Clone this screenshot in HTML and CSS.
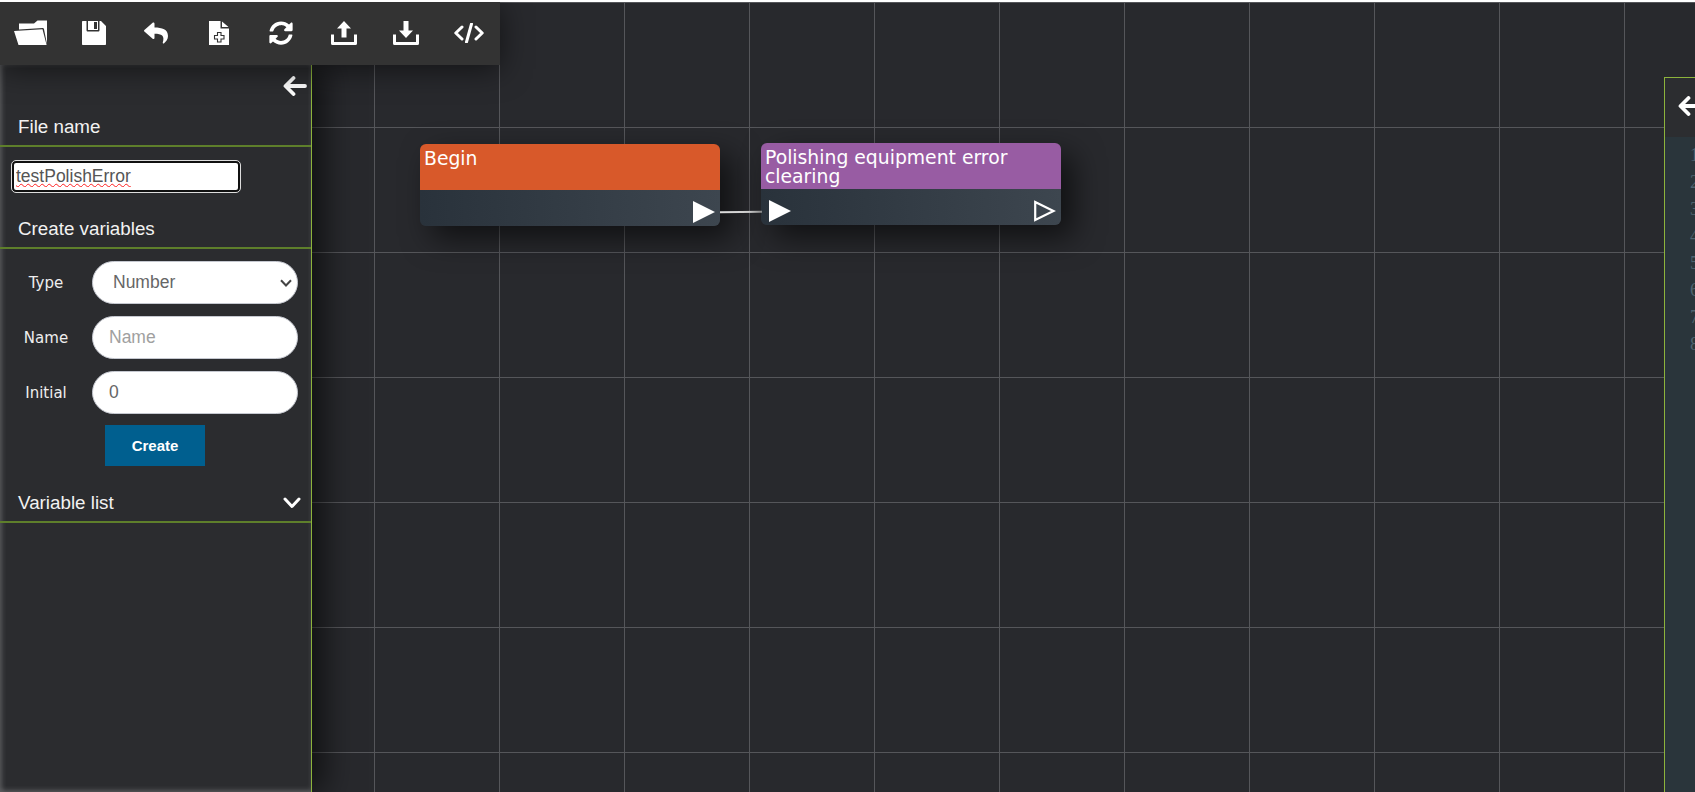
FILE: index.html
```html
<!DOCTYPE html>
<html lang="en">
<head>
    <meta charset="UTF-8">
    <title>Flow editor</title>
    <link rel="stylesheet" href="styles.css">
</head>
<body>
    <div class="app">
        <!-- Graph nodes -->
        <div class="node node-begin">
            <div class="node-title">Begin</div>
            <div class="node-body">
                <svg class="port" viewBox="0 0 22 22"><path d="M0 0L22 11L0 22z" fill="#fff"/></svg>
            </div>
        </div>
        <div class="node node-action">
            <div class="node-title">Polishing equipment error clearing</div>
            <div class="node-body">
                <svg class="port" viewBox="0 0 22 22"><path d="M0 0L22 11L0 22z" fill="#fff"/></svg>
                <svg class="port" viewBox="0 0 22 22"><path d="M1.2 2L19.5 11L1.2 20z" fill="none" stroke="#fff" stroke-width="2.2"/></svg>
            </div>
        </div>
        <div class="wire"></div>

        <!-- Toolbar -->
        <div class="toolbar">
            <svg class="tool tool-folder" viewBox="0 0 34 26"><path d="M5 5.5V3.5H20L23.5 0.5H33V24L30 9.3C29.8 8.5 29.3 8 28.5 8L5 9.6z M0 11L28.5 9.2L32.6 25H4.5z" fill="#fff"/></svg>
            <svg class="tool" viewBox="0 0 24 24"><path fill-rule="evenodd" d="M1 0H4.5V9C4.5 10 5 10.500 6 10.500H16C17 10.500 17.500 10 17.500 9V0H19L24 5V23C24 23.600 23.600 24 23 24H1C0.400 24 0 23.600 0 23V1C0 0.400 0.400 0 1 0z M6 0H16V9H6z M12 1V8H15V1z" fill="#fff"/></svg>
            <svg class="tool" viewBox="0 0 512 512"><path d="M8.309 189.836L184.313 37.851C199.719 24.546 224 35.347 224 56.015v80.053c160.629 1.839 288 34.032 288 186.258 0 61.441-39.581 122.309-83.333 154.132-13.653 9.931-33.111-2.533-28.077-18.631 45.344-145.012-21.507-183.51-176.59-185.742V360c0 20.7-24.3 31.453-39.687 18.164l-176.004-152c-11.071-9.562-11.086-26.753 0-36.328z" fill="#fff"/></svg>
            <svg class="tool" viewBox="0 0 20 24"><path d="M0 0H11.500V7.500H20V24H0z M13 0.500L19.500 6H13z" fill="#fff"/><path d="M8.500 11.500H12V14.500H15V18H12V21H8.500V18H5.500V14.500H8.500z" fill="#fff" stroke="#333" stroke-width="1.1"/></svg>
            <svg class="tool" viewBox="0 0 512 512"><path d="M370.72 133.28C339.458 104.008 298.888 87.962 255.848 88c-77.458.068-144.328 53.178-162.791 126.85-1.344 5.363-6.122 9.15-11.651 9.15H24.103c-7.498 0-13.194-6.807-11.807-14.176C33.933 94.924 134.813 8 256 8c66.448 0 126.791 26.136 171.315 68.685L463.03 40.97C478.149 25.851 504 36.559 504 57.941V192c0 13.255-10.745 24-24 24H345.941c-21.382 0-32.09-25.851-16.971-40.971l41.75-41.749zM32 296h134.059c21.382 0 32.09 25.851 16.971 40.971l-41.75 41.75c31.262 29.273 71.835 45.319 114.876 45.28 77.418-.07 144.315-53.144 162.787-126.849 1.344-5.363 6.122-9.15 11.651-9.15h57.304c7.498 0 13.194 6.807 11.807 14.176C478.067 417.076 377.187 504 256 504c-66.448 0-126.791-26.136-171.315-68.685L48.97 471.03C33.851 486.149 8 475.441 8 454.059V320c0-13.255 10.745-24 24-24z" fill="#fff"/></svg>
            <svg class="tool tool-wide" viewBox="0 0 26 24"><path d="M1.500 13.500V22.500H24.500V13.500" fill="none" stroke="#fff" stroke-width="3" stroke-linejoin="round"/><path d="M13 0L20 7.500H15.500V16.500H10.500V7.500H6z" fill="#fff"/></svg>
            <svg class="tool tool-wide" viewBox="0 0 26 24"><path d="M1.500 13.500V22.500H24.500V13.500" fill="none" stroke="#fff" stroke-width="3" stroke-linejoin="round"/><path d="M13 17L20 9.500H15.500V0H10.500V9.500H6z" fill="#fff"/></svg>
            <svg class="tool tool-code" viewBox="0 0 30 20"><path d="M8 4L1.800 10L8 16M22 4L28.200 10L22 16" fill="none" stroke="#fff" stroke-width="3" stroke-linecap="round" stroke-linejoin="round"/><path d="M17.500 1L12.500 19" fill="none" stroke="#fff" stroke-width="3" stroke-linecap="round"/></svg>
        </div>

        <!-- Left panel -->
        <div class="panel">
            <div class="panel-back">
                <svg class="arrow" viewBox="0 0 24 20"><path d="M22 10H3M10.500 2L2.500 10L10.500 18" fill="none" stroke="#fff" stroke-width="3.800" stroke-linecap="round" stroke-linejoin="round"/></svg>
            </div>
            <div class="section-title">File name</div>
            <input class="file-name" type="text" value="testPolishError">
            <div class="section-title section-gap">Create variables</div>
            <form class="var-form">
                <label class="var-label" for="varType">Type</label>
                <div class="select-wrap">
                    <select class="var-input" id="varType"><option>Number</option></select>
                    <svg class="select-arrow" viewBox="0 0 12 8"><path d="M1 1.200L6 6.500L11 1.200" fill="none" stroke="#444" stroke-width="2"/></svg>
                </div>
                <label class="var-label" for="varName">Name</label>
                <input class="var-input" id="varName" type="text" placeholder="Name">
                <label class="var-label" for="varInitial">Initial</label>
                <input class="var-input" id="varInitial" type="text" value="0">
                <button class="create-btn" type="button">Create</button>
            </form>
            <div class="section-title section-gap section-row">
                <span>Variable list</span>
                <svg class="chevron" viewBox="0 0 18 12"><path d="M2 2L9 9.500L16 2" fill="none" stroke="#fff" stroke-width="3" stroke-linecap="round" stroke-linejoin="round"/></svg>
            </div>
        </div>

        <!-- Right code panel, runs off the window -->
        <div class="code-panel">
            <div class="code-head">
                <svg class="arrow" viewBox="0 0 24 20"><path d="M22 10H3M10.500 2L2.500 10L10.500 18" fill="none" stroke="#fff" stroke-width="3.800" stroke-linecap="round" stroke-linejoin="round"/></svg>
            </div>
            <div class="code-body">
                <div>1</div><div>2</div><div>3</div><div>4</div><div>5</div><div>6</div><div>7</div><div>8</div>
            </div>
        </div>
    </div>
</body>
</html>
```

FILE: styles.css
```css
html, body {
    height: 100%;
    margin: 0;
    overflow: hidden;
}
body {
    background-color: #fff;
    padding-top: 2px;
    box-sizing: border-box;
    font-family: "Liberation Sans", Arial, sans-serif;
}
.app {
    position: relative;
    height: 100%;
    overflow: hidden;
    background-color: #28292d;
    background-image:
        linear-gradient(to right, transparent 124px, #55565a 124px, #55565a 125px),
        linear-gradient(to bottom, #55565a 1px, transparent 1px);
    background-size: 125px 125px;
}

/* toolbar */
.toolbar {
    position: absolute;
    top: 0;
    left: 0;
    z-index: 3;
    width: 500px;
    height: 63px;
    padding-bottom: 2px;
    box-sizing: border-box;
    display: grid;
    grid-template-columns: repeat(8, 1fr);
    align-items: center;
    justify-items: center;
    background-color: #333;
    box-shadow: 0 4px 30px rgba(0, 0, 0, 0.55);
}
.tool {
    height: 24px;
    width: 34px;
}
.tool-folder {
    height: 26px;
    width: 34px;
}
.tool-wide {
    width: 26px;
}
.tool-code {
    width: 30px;
    height: 20px;
}

/* left panel */
.panel {
    position: absolute;
    top: 63px;
    left: 0;
    bottom: 0;
    z-index: 2;
    width: 311px;
    background-color: #2b2c2f;
    border-right: 1px solid #8cb33c;
    box-shadow: 12px 0 30px rgba(0, 0, 0, 0.6), inset 3px 0 4px rgba(255, 255, 255, 0.13), inset 0 -3px 4px rgba(255, 255, 255, 0.13);
}
.panel-back {
    height: 46px;
    display: flex;
    justify-content: flex-end;
    align-items: flex-start;
    padding: 11px 4px 0 0;
    box-sizing: border-box;
}
.arrow {
    width: 24px;
    height: 20px;
}
.section-title {
    height: 36px;
    box-sizing: border-box;
    padding: 1px 0 3px 18px;
    line-height: 30px;
    font-size: 18.8px;
    color: #f2f2f2;
    border-bottom: 2px solid #5e7f2b;
}
.section-gap {
    margin-top: 21px;
}
.section-row {
    display: flex;
    justify-content: space-between;
    align-items: center;
    padding-right: 10px;
}
.chevron {
    width: 18px;
    height: 12px;
}
.file-name {
    display: block;
    width: 228px;
    height: 31px;
    margin: 14px 0 0 12px;
    padding: 0 0 0 2px;
    box-sizing: border-box;
    font-family: inherit;
    font-size: 17.5px;
    color: #555;
    background-color: #fff;
    border: 2px solid #111;
    border-radius: 4px;
    outline: 1px solid #ddd;
    text-decoration: underline wavy #ff2020 1px;
}
.var-form {
    display: grid;
    grid-template-columns: 92px 206px;
    row-gap: 12px;
    align-items: center;
    padding-top: 12px;
}
.var-label {
    text-align: center;
    font-family: "DejaVu Sans", sans-serif;
    font-size: 15px;
    color: #eee;
}
.var-input {
    display: block;
    height: 43px;
    width: 206px;
    padding: 0 16px;
    box-sizing: border-box;
    font-family: inherit;
    font-size: 17.5px;
    color: #666;
    background-color: #fff;
    border: 1px solid #c5c8d0;
    border-radius: 22px;
    outline: none;
}
.var-input::placeholder {
    color: #a0a0a0;
}
.select-wrap {
    position: relative;
}
select.var-input {
    appearance: none;
    padding: 0 0 2px 20px;
}
.select-arrow {
    position: absolute;
    top: 18px;
    right: 6px;
    width: 12px;
    height: 8px;
}
.create-btn {
    grid-column: 2;
    justify-self: start;
    width: 100px;
    height: 41px;
    margin: -1px 0 0 13px;
    font-family: inherit;
    font-size: 15px;
    font-weight: bold;
    color: #fff;
    background-color: #005f8f;
    border: none;
}

/* nodes on the canvas */
.node {
    position: absolute;
    width: 300px;
    border-radius: 6px;
    overflow: hidden;
    box-shadow: 12px 12px 30px rgba(0, 0, 0, 0.6);
}
.node-begin {
    left: 420px;
    top: 142px;
}
.node-action {
    left: 761px;
    top: 141px;
}
.node-title {
    height: 46px;
    padding: 5px 4px 0;
    box-sizing: border-box;
    font-family: "DejaVu Sans", sans-serif;
    font-size: 18.8px;
    line-height: 19px;
    color: #fff;
}
.node-begin .node-title {
    background-color: #d8592a;
}
.node-action .node-title {
    background-color: #985ca3;
}
.node-body {
    height: 36px;
    box-sizing: border-box;
    display: flex;
    justify-content: space-between;
    align-items: center;
    padding: 8px 5px 0 8px;
    background: linear-gradient(to right, #29323b, #3d464f);
}
.node-begin .node-body {
    justify-content: flex-end;
}
.port {
    width: 22px;
    height: 22px;
}
.wire {
    position: absolute;
    left: 720px;
    top: 209px;
    width: 42px;
    height: 2px;
    background: linear-gradient(to right, #ddd, #ccc 70%, #888);
    transform: rotate(-1deg);
}

/* code panel */
.code-panel {
    position: absolute;
    top: 75px;
    left: 1664px;
    bottom: 0;
    width: 400px;
    background-color: #2c2d30;
    border-left: 1px solid #8cb33c;
    border-top: 1px solid #8cb33c;
}
.code-head {
    height: 59px;
    padding: 18px 0 0 13px;
    box-sizing: border-box;
}
.code-body {
    height: 100%;
    padding: 5px 0 0 25px;
    box-sizing: border-box;
    background-color: #2a353b;
    font-family: "Liberation Serif", serif;
    font-size: 18px;
    line-height: 27px;
    color: #4f6470;
}
```
